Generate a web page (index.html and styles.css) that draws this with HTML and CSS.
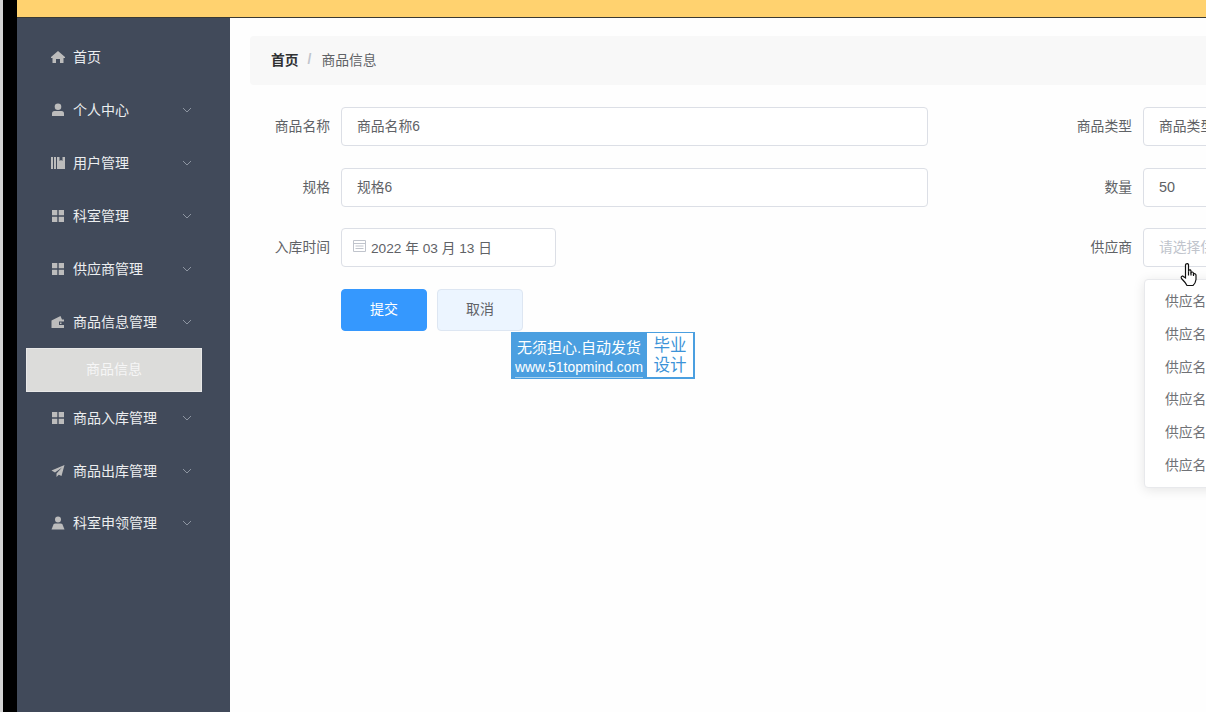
FILE: index.html
```html
<!DOCTYPE html>
<html lang="zh-CN">
<head>
<meta charset="utf-8">
<title>商品信息</title>
<link rel="stylesheet" href="styles.css">
</head>
<body>
<div class="app">
  <div class="edge"></div>
  <div class="window">
    <header class="topbar"></header>
    <div class="body">
      <nav class="sidebar">
        <div class="item"><svg class="ico" viewBox="0 0 14 14"><path d="M7 1 L14 7 V8 H12.500 V13 H9 V9 H5 V13 H1.500 V8 H0 V7 Z"/></svg><span>首页</span></div>
        <div class="item"><svg class="ico" viewBox="0 0 14 14"><circle cx="7" cy="3.800" r="3.300"/><path d="M1 13 V10.500 Q1 8 3.500 8 H10.500 Q13 8 13 10.500 V13 Z"/></svg><span>个人中心</span><svg class="chev" viewBox="0 0 10 6"><path d="M1 1 L5 5 L9 1"/></svg></div>
        <div class="item"><svg class="ico" viewBox="0 0 14 14"><path d="M0 1 H2 V13 H0 Z M3 1 H5 V13 H3 Z M6 1 H8.500 V5 L10 4 L11.500 5 V1 H14 V13 H6 Z"/></svg><span>用户管理</span><svg class="chev" viewBox="0 0 10 6"><path d="M1 1 L5 5 L9 1"/></svg></div>
        <div class="item"><svg class="ico" viewBox="0 0 14 14"><path d="M1 1 H6.300 V6.300 H1 Z M7.700 1 H13 V6.300 H7.700 Z M1 7.700 H6.300 V13 H1 Z M7.700 7.700 H13 V13 H7.700 Z"/></svg><span>科室管理</span><svg class="chev" viewBox="0 0 10 6"><path d="M1 1 L5 5 L9 1"/></svg></div>
        <div class="item"><svg class="ico" viewBox="0 0 14 14"><path d="M1 1 H6.300 V6.300 H1 Z M7.700 1 H13 V6.300 H7.700 Z M1 7.700 H6.300 V13 H1 Z M7.700 7.700 H13 V13 H7.700 Z"/></svg><span>供应商管理</span><svg class="chev" viewBox="0 0 10 6"><path d="M1 1 L5 5 L9 1"/></svg></div>
        <div class="item"><svg class="ico" viewBox="0 0 14 14"><path fill-rule="evenodd" d="M0.500 5.500 L9.500 1 L11 4.500 H13 V6.500 H8 V10 H13 V13 H0.500 Z M9 7.500 H10.500 V9 H9 Z"/></svg><span>商品信息管理</span><svg class="chev" viewBox="0 0 10 6"><path d="M1 1 L5 5 L9 1"/></svg></div>
        <div class="sub"><span>商品信息</span></div>
        <div class="item"><svg class="ico" viewBox="0 0 14 14"><path d="M1 1 H6.300 V6.300 H1 Z M7.700 1 H13 V6.300 H7.700 Z M1 7.700 H6.300 V13 H1 Z M7.700 7.700 H13 V13 H7.700 Z"/></svg><span>商品入库管理</span><svg class="chev" viewBox="0 0 10 6"><path d="M1 1 L5 5 L9 1"/></svg></div>
        <div class="item"><svg class="ico" viewBox="0 0 14 14"><path d="M13.500 1 L0.500 6.500 L4 8.500 L11 3.500 L5.500 9.500 V13 L7.800 10.800 L10.500 12 Z"/></svg><span>商品出库管理</span><svg class="chev" viewBox="0 0 10 6"><path d="M1 1 L5 5 L9 1"/></svg></div>
        <div class="item"><svg class="ico" viewBox="0 0 14 14"><circle cx="7" cy="3.500" r="3"/><path d="M0.500 13.500 L2.500 8.500 Q3 7.500 4.500 7.500 H9.500 Q11 7.500 11.500 8.500 L13.500 13.500 Z"/></svg><span>科室申领管理</span><svg class="chev" viewBox="0 0 10 6"><path d="M1 1 L5 5 L9 1"/></svg></div>
      </nav>
      <main class="main">
        <div class="crumbs"><b>首页</b><i>/</i><span>商品信息</span></div>
        <form class="form">
          <div class="field"><label>商品名称</label><div class="input">商品名称6</div></div>
          <div class="field"><label>商品类型</label><div class="input">商品类型6</div></div>
          <div class="field"><label>规格</label><div class="input">规格6</div></div>
          <div class="field"><label>数量</label><div class="input num">50</div></div>
          <div class="field"><label>入库时间</label>
            <div class="input date"><svg class="cal" viewBox="0 0 13 13"><path d="M0.500 1.500 H12.500 V12.500 H0.500 Z M0.500 4.500 H12.500 M2.500 7 H10.500 M2.500 9.500 H10.500"/></svg>2022 年 03 月 13 日</div>
          </div>
          <div class="field select"><label>供应商</label><div class="input ph">请选择供应商</div>
            <svg class="hand" viewBox="0 0 18 24"><path d="M6 1.500 Q7.500 0.500 8.500 2 V9 L9 7.500 Q10.500 6.800 11 8.500 V10 Q12.500 8.800 13.500 10.500 V11.500 Q15.200 10.500 16 12.500 V17 Q15.500 21 13 23 H7 Q5.500 20 1.500 16 Q0.500 14 2.500 13.500 L5.500 15.500 V2.500 Z"/><path d="M8.500 9 V13 M11 10 V13 M13.500 11.500 V13.500"/></svg>
            <ul class="menu">
              <li>供应名称1</li><li>供应名称2</li><li>供应名称3</li><li>供应名称4</li><li>供应名称5</li><li>供应名称6</li>
            </ul>
          </div>
          <div class="actions">
            <button type="button" class="btn primary">提交</button>
            <button type="button" class="btn plain">取消</button>
            <div class="stamp">
              <div class="stamp-left"><strong>无须担心.自动发货</strong><em>www.51topmind.com</em></div>
              <div class="stamp-right">毕业<br>设计</div>
            </div>
          </div>
        </form>
      </main>
    </div>
  </div>
</div>
</body>
</html>
```
FILE: styles.css
```css
* { box-sizing: border-box; }
html, body { margin: 0; height: 100%; overflow: hidden; }
body { font-family: "Liberation Sans", "Noto Sans CJK SC", sans-serif; font-size: 13.800px; color: #606266; background: #fefefe; }
.app { display: flex; width: 1206px; height: 712px; overflow: hidden; }
.edge { width: 17px; flex: none; background: #000; border-left: 3px solid #d4d4d4; }
.window { flex: 1; min-width: 0; display: flex; flex-direction: column; }
.topbar { height: 18px; flex: none; background: #ffd26f; border-bottom: 1px solid #3a3a34; }
.body { flex: 1; display: flex; min-height: 0; }
.sidebar { width: 213px; flex: none; background: #414a5a; padding-top: 13px; }
.item { height: 53px; display: flex; align-items: center; padding-left: 34px; color: #eceef0; position: relative; font-size: 14px; }
.item:last-child { margin-top: -1px; }
.item span, .sub span { padding-bottom: 4px; }
.ico { width: 14px; height: 14px; margin-right: 8px; fill: #bcbcbc; flex: none; position: relative; top: -1px; }
.chev { position: absolute; left: 165px; top: 23px; width: 10px; height: 6px; fill: none; stroke: #8d95a1; stroke-width: 1; }
.sub { height: 44px; margin: -1px 28px 0 9px; background: #dcdcda; color: #f6f6f6; display: flex; align-items: center; justify-content: center; border: 1px solid #e8e8e8; font-size: 14px; }
.main { flex: 1; min-width: 0; padding: 18px 0 0 20px; overflow: hidden; position: relative; }
.crumbs { height: 49px; width: 1100px; background: #f8f8f8; border-radius: 4px; display: flex; align-items: center; padding: 0 0 3px 21px; color: #606266; }
.crumbs b { color: #303133; font-weight: 700; }
.crumbs i { font-style: normal; font-weight: 700; color: #c0c4cc; margin: 0 10px 0 9px; }
.form { margin-top: 22px; display: grid; grid-template-columns: 678px 678px; column-gap: 124px; row-gap: 21.500px; }
.field { display: grid; grid-template-columns: 80px 587px; column-gap: 11px; align-items: center; position: relative; }
.field label { text-align: right; color: #606266; padding-bottom: 3px; }
.input { height: 39px; border: 1px solid #dcdfe6; border-radius: 4px; background: #fff; display: flex; align-items: center; padding: 0 0 3px 15px; color: #606266; }
.num { padding-bottom: 0; font-size: 14.400px; }
.date { width: 215px; padding: 0 0 2px 11px; font-size: 13.700px; }
.cal { width: 13px; height: 13px; margin-right: 5px; fill: none; stroke: #c0c4cc; stroke-width: 1; position: relative; top: -1px; }
.ph { color: #c0c4cc; }
.hand { position: absolute; left: 128px; top: 34px; width: 18px; height: 25px; fill: #fff; stroke: #111; stroke-width: 1.200; z-index: 3; }
.menu { position: absolute; left: 92px; top: 51px; width: 220px; height: 209px; margin: 0; padding: 6px 0; list-style: none; background: #fff; border: 1px solid #e8e9ec; border-radius: 4px; box-shadow: 0 2px 12px rgba(0,0,0,.1); z-index: 2; }
.menu li { height: 32.800px; line-height: 32.800px; padding-left: 20px; color: #707276; }
.actions { grid-column: 1 / span 2; display: flex; gap: 10px; padding-left: 91px; position: relative; }
.btn { width: 86px; height: 42px; border-radius: 4px; font: inherit; font-size: 14px; padding: 0 0 3px; }
.primary { background: #3598fe; border: 1px solid #3598fe; color: #fff; }
.plain { background: #ecf5ff; border: 1px solid #dde6f2; color: #606266; }
.stamp { position: absolute; left: 261px; top: 43px; width: 184px; height: 47px; background: #4b9fe0; display: flex; }
.stamp-left { width: 136px; display: flex; flex-direction: column; align-items: center; color: #fff; padding-top: 5px; }
.stamp-left strong { font-weight: 400; font-size: 15px; line-height: 21px; white-space: nowrap; }
.stamp-left em { font-style: normal; font-size: 13.900px; line-height: 19px; white-space: nowrap; border-bottom: 1px solid #a9d2f0; }
.stamp-right { width: 46px; margin: 1px 2px 2px 0; background: #fff; color: #3c93d8; font-size: 16.500px; line-height: 20px; text-align: center; padding-top: 2px; }
```
